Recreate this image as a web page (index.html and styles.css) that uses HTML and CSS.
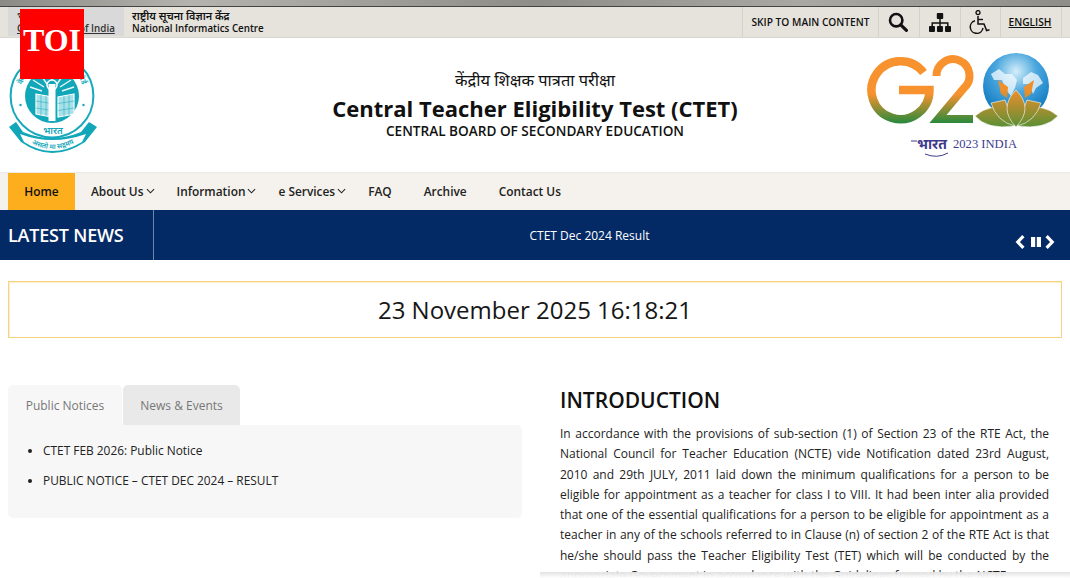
FILE: index.html
```html
<!DOCTYPE html>
<html lang="en">
<head>
<meta charset="utf-8">
<title>CTET</title>
<link rel="stylesheet" href="styles.css">
</head>
<body>
<div class="page">
  <div class="topbar">
    <div class="gov">
      <div class="gov-item gov-first"><span class="hi">भारत सरकार</span><a class="en">Government of India</a></div>
      <div class="gov-item"><span class="hi">राष्ट्रीय सूचना विज्ञान केंद्र</span><span class="en">National Informatics Centre</span></div>
    </div>
    <div class="tools">
      <div class="tool skip">SKIP TO MAIN CONTENT</div>
      <div class="tool icon-tool nudge"><svg width="20" height="20" viewBox="0 0 20 20"><circle cx="8.2" cy="8.2" r="6.2" fill="none" stroke="#111" stroke-width="2.6"/><path d="M12.8 12.8 18.4 18.4" stroke="#111" stroke-width="3.2" stroke-linecap="round"/></svg></div>
      <div class="tool icon-tool"><svg width="22" height="19" viewBox="0 0 24 19" preserveAspectRatio="none"><rect x="8.5" y="0" width="7" height="6" rx="1" fill="#111"/><path d="M12 6V10M3.5 13V10H20.5V13M12 10V13" fill="none" stroke="#111" stroke-width="1.6"/><rect x="0" y="13" width="6.5" height="6" rx="1" fill="#111"/><rect x="8.7" y="13" width="6.5" height="6" rx="1" fill="#111"/><rect x="17.5" y="13" width="6.5" height="6" rx="1" fill="#111"/></svg></div>
      <div class="tool icon-tool narrow"><svg width="22" height="24" viewBox="0 0 22 24"><circle cx="10" cy="2.6" r="2" fill="none" stroke="#111" stroke-width="1.3"/><path d="M10 6V14H16L18.6 20.5 21.5 19.8" fill="none" stroke="#111" stroke-width="1.5"/><path d="M10 9.5H15" stroke="#111" stroke-width="1.4"/><path d="M7 10.8A6.4 6.4 0 1 0 15 18" fill="none" stroke="#111" stroke-width="1.5"/></svg></div>
      <div class="tool lang">ENGLISH</div>
    </div>
  </div>

  <header class="masthead">
    <svg class="emblem" width="90" height="100" viewBox="0 0 90 100">
      <defs>
        <path id="ringText" d="M14 55A32 32 0 1 1 72 55"/>
        <path id="ribbonText" d="M12 82Q43 108 76 82"/>
      </defs>
      <circle cx="43" cy="42" r="41.4" fill="none" stroke="#19a9bd" stroke-width="2"/>
      <circle cx="43" cy="42" r="27" fill="#12a6b9"/>
      <text class="ring-label"><textPath href="#ringText" startOffset="50%" text-anchor="middle">केन्द्रीय माध्यमिक शिक्षा बोर्ड</textPath></text>
      <circle cx="11.5" cy="51" r="1.2" fill="#12a6b9"/>
      <circle cx="74.5" cy="51" r="1.2" fill="#12a6b9"/>
      <path d="M43 24V32M31 20 38 30M55 20 48 30M24 26 35 33M62 26 51 33M21 33 33 37M65 33 53 37" stroke="#e8f8fa" stroke-width="1.4"/>
      <circle cx="43" cy="31" r="5" fill="#12a6b9" stroke="#fff" stroke-width="1.5"/>
      <path d="M27 40 43 43V63L27 60ZM65 40 49 43V63L65 60Z" fill="#a8e0e8" stroke="#fff" stroke-width="1.2"/>
      <path d="M32 41V61M37 42V62M27 47 43 49.5M27 54 43 56.5M60 41V61M55 42V62M65 47 49 49.5M65 54 49 56.5" stroke="#12a6b9" stroke-width=".5"/>
      <rect x="39.5" y="30" width="7" height="37" fill="#fff"/>
      <path d="M0 73 7 68 14 78Q43 90 72 78L80 68 88 73 76 88Q43 110 12 88Z" fill="#12a6b9"/>
      <path d="M11 80Q43 92 77 80L73 88Q43 106 15 88Z" fill="#fff"/>
      <text class="ribbon-label"><textPath href="#ribbonText" startOffset="50%" text-anchor="middle">असतो मा सद्गमय</textPath></text>
      <text class="bharat" x="44" y="80" text-anchor="middle">भारत</text>
    </svg>
    <div class="title">
      <div class="title-hi">केंद्रीय शिक्षक पात्रता परीक्षा</div>
      <h1>Central Teacher Eligibility Test (CTET)</h1>
      <div class="title-board">CENTRAL BOARD OF SECONDARY EDUCATION</div>
    </div>
    <svg class="g20" width="195" height="110" viewBox="0 0 195 110">
      <defs>
        <linearGradient id="tri" gradientUnits="userSpaceOnUse" x1="0" y1="44" x2="0" y2="72"><stop offset="0" stop-color="#f7922e"/><stop offset="1" stop-color="#2f8a3c"/></linearGradient>
        <linearGradient id="lotus" gradientUnits="userSpaceOnUse" x1="0" y1="40" x2="0" y2="76"><stop offset="0" stop-color="#ef8f2c"/><stop offset="1" stop-color="#5f8f35"/></linearGradient>
        <radialGradient id="globe" cx=".5" cy=".28" r=".7"><stop offset="0" stop-color="#d5eefa"/><stop offset=".45" stop-color="#4aa6dd"/><stop offset="1" stop-color="#0b77bf"/></radialGradient>
      </defs>
      <path d="M58.5 22.5A29 29 0 1 0 64.5 40H34" fill="none" stroke="url(#tri)" stroke-width="8.5"/>
      <path d="M71.5 26A16.5 16.5 0 1 1 99 38L73 69H108" fill="none" stroke="url(#tri)" stroke-width="8"/>
      <circle cx="151" cy="36" r="33" fill="url(#globe)"/>
      <path d="M126 24 134 19 140 24 147 24 152 30 150 38 146 46 141 40 137 30 129 30ZM158 28 166 22 173 25 178 33 171 38 168 44 164 34 158 34Z" fill="#f4fbff" opacity=".75"/>
      <path d="M133 30 143 37 142 48 136 44ZM169 30 159 37 160 48 166 44Z" fill="url(#lotus)"/>
      <path d="M110 66Q126 52 144 61L149 76Q122 80 110 66ZM193 66Q177 52 158 61L153 76Q180 80 193 66Z" fill="url(#lotus)" stroke="#fff" stroke-width=".6"/>
      <path d="M126 53 140 50 150 76Q132 72 126 53ZM176 53 162 50 152 76Q170 72 176 53Z" fill="url(#lotus)" stroke="#fff" stroke-width=".6"/>
      <path d="M151 40Q169 58 151 77 133 58 151 40Z" fill="url(#lotus)" stroke="#fff" stroke-width=".6"/>
      <path d="M46 91H52M60 104Q72 109 83 103" fill="none" stroke="#3e3a8c" stroke-width="1"/>
      <text class="g20-hi" x="52" y="99">भारत</text>
      <text class="g20-en" x="88" y="98">2023 INDIA</text>
    </svg>
  </header>

  <nav class="nav">
    <a class="nav-item active">Home</a>
    <a class="nav-item caret">About Us<svg width="9" height="6" viewBox="0 0 10 6"><path d="M1 1 5 5 9 1" fill="none" stroke="#222" stroke-width="1.2"/></svg></a>
    <a class="nav-item caret">Information<svg width="9" height="6" viewBox="0 0 10 6"><path d="M1 1 5 5 9 1" fill="none" stroke="#222" stroke-width="1.2"/></svg></a>
    <a class="nav-item caret">e Services<svg width="9" height="6" viewBox="0 0 10 6"><path d="M1 1 5 5 9 1" fill="none" stroke="#222" stroke-width="1.2"/></svg></a>
    <a class="nav-item">FAQ</a>
    <a class="nav-item">Archive</a>
    <a class="nav-item">Contact Us</a>
  </nav>

  <section class="news">
    <div class="news-label">LATEST NEWS</div>
    <div class="news-text">CTET Dec 2024 Result</div>
    <div class="news-controls">
      <svg class="prev" width="10" height="14" viewBox="0 0 10 14"><path d="M8.4 1.2 2.8 7 8.4 12.8" fill="none" stroke="#fff" stroke-width="3.2"/></svg>
      <svg width="10" height="10" viewBox="0 0 10 10"><rect x="0" y="0" width="4.2" height="10" fill="#fff"/><rect x="5.8" y="0" width="4.2" height="10" fill="#fff"/></svg>
      <svg width="10" height="14" viewBox="0 0 10 14"><path d="M1.6 1.2 7.2 7 1.6 12.8" fill="none" stroke="#fff" stroke-width="3.2"/></svg>
    </div>
  </section>

  <div class="clock">23 November 2025 16:18:21</div>

  <main class="content">
    <div class="notices">
      <div class="tabs">
        <div class="tab tab-active">Public Notices</div>
        <div class="tab">News &amp; Events</div>
      </div>
      <div class="tab-panel">
        <ul>
          <li>CTET FEB 2026: Public Notice</li>
          <li>PUBLIC NOTICE – CTET DEC 2024 – RESULT</li>
        </ul>
      </div>
    </div>
    <article class="intro">
      <h2>INTRODUCTION</h2>
      <p>In accordance with the provisions of sub-section (1) of Section 23 of the RTE Act, the National Council for Teacher Education (NCTE) vide Notification dated 23rd August, 2010 and 29th JULY, 2011 laid down the minimum qualifications for a person to be eligible for appointment as a teacher for class I to VIII. It had been inter alia provided that one of the essential qualifications for a person to be eligible for appointment as a teacher in any of the schools referred to in Clause (n) of section 2 of the RTE Act is that he/she should pass the Teacher Eligibility Test (TET) which will be conducted by the appropriate Government in accordance with the Guidelines framed by the NCTE.</p>
    </article>
  </main>
</div>
<div class="top-shade"></div>
<div class="bottom-shade"></div>
<div class="toi">TOI</div>
</body>
</html>
```
FILE: styles.css
```css
* { box-sizing: border-box; }
html, body { margin: 0; padding: 0; height: 578px; overflow: hidden; background: #fff; }
body { font-family: "Open Sans", "Noto Sans", sans-serif; color: #111; }
a { color: inherit; }
.page { width: 1070px; }

.topbar { height: 38px; padding-top: 7px; background: #e6e3dc; border-bottom: 1px solid #d8d6d0; display: flex; justify-content: space-between; }
.gov { display: flex; padding-left: 8px; }
.gov-item { display: flex; flex-direction: column; justify-content: center; height: 29px; padding: 0 8px; line-height: 13px; }
.gov-first { width: 116px; padding-left: 9px; background: #d9d9d9; color: #333; }
.gov-first .en { text-decoration: underline; }
.hi { font-family: "Noto Sans", "Open Sans", sans-serif; font-size: 10.8px; font-weight: 600; }
.en { font-size: 9.8px; font-weight: 600; white-space: nowrap; }
.tools { display: flex; height: 30px; padding-right: 8px; }
.tool { display: flex; align-items: center; justify-content: center; border-left: 1px solid #d4d2cb; font-size: 10.2px; font-weight: 600; }
.skip { width: 136px; }
.icon-tool { width: 41px; }
.icon-tool.nudge { padding-right: 2px; }
.icon-tool.narrow { width: 40px; padding-right: 3px; }
.lang { width: 62px; padding-right: 2px; border-right: 1px solid #d4d2cb; text-decoration: underline; }

.masthead { height: 134px; position: relative; display: flex; justify-content: space-between; padding: 0 10px 0 9px; }
.emblem { margin-top: 16px; }
.ring-label { font-family: "Noto Sans", sans-serif; font-size: 7.5px; font-weight: 600; fill: #12a6b9; }
.ribbon-label { font-family: "Noto Sans", sans-serif; font-size: 7px; font-weight: 600; fill: #12a6b9; }
.bharat { font-family: "Noto Sans", sans-serif; font-size: 9.5px; font-weight: 600; fill: #12a6b9; }
.title { position: absolute; left: 0; right: 0; top: 31px; text-align: center; }
.title-hi { font-family: "Noto Sans", sans-serif; font-size: 16.4px; line-height: 22px; }
h1 { margin: 0 0 -1px; padding-top: 1px; font-size: 22px; line-height: 32px; font-weight: 700; color: #111; }
.title-board { font-size: 13.6px; line-height: 16px; font-weight: 600; }
.g20 { margin-top: 12px; }
.g20-hi { font-family: "Noto Sans", sans-serif; font-size: 14px; font-weight: 700; fill: #3e3a8c; }
.g20-en { font-family: "Liberation Serif", serif; font-size: 12.6px; fill: #3e3a8c; }

.nav { height: 38px; padding-left: 8px; background: #f5f2ed; border-top: 1px solid #eceae5; display: flex; font-size: 11.9px; font-weight: 600; color: #222; }
.nav-item { display: flex; align-items: center; padding: 0 16px 1px; gap: 2px; height: 37px; }
.nav-item.caret { padding-right: 6px; }
.active { background: #fdae1c; color: #111; width: 67px; justify-content: center; padding: 0 0 1px; }

.news { height: 50px; background: #042a66; color: #fff; display: flex; align-items: center; position: relative; }
.news-label { width: 154px; height: 50px; padding-left: 8px; border-right: 1px solid #6f86ab; font-size: 18px; font-weight: 600; line-height: 50px; letter-spacing: -.2px; }
.news-text { flex: 1; text-align: center; font-size: 12px; font-weight: 500; padding-right: 45px; }
.news-controls { position: absolute; right: 15px; top: 25px; display: flex; align-items: center; gap: 4px; }
.prev { margin-right: 2px; }

.clock { margin: 21px 8px 0; height: 57px; border: 1px solid #f6d283; box-shadow: inset 1px 1px 0 rgba(252, 222, 165, .5); font-size: 24px; line-height: 55px; text-align: center; color: #161616; }

.content { display: flex; padding: 47px 21px 0 8px; gap: 38px; }
.notices { width: 514px; flex-shrink: 0; }
.tabs { display: flex; gap: 1px; height: 40px; font-size: 12px; color: #777; }
.tab { width: 117px; background: #e9e9e9; border-radius: 5px 5px 0 0; line-height: 41px; text-align: center; }
.tab-active { width: 114px; background: #f7f7f7; }
.tab-panel { height: 93px; background: #f7f7f7; border-radius: 0 5px 5px 5px; padding-top: 10px; font-size: 11.9px; color: #222; }
.tab-panel ul { margin: 0; padding-left: 35px; }
.tab-panel li { line-height: 30px; }
.intro { flex: 1; }
h2 { margin: 0 0 9px; font-size: 21px; line-height: 30px; font-weight: 600; color: #111; }
.intro p { margin: 0; font-size: 12px; line-height: 20.25px; text-align: justify; color: #222; }

.top-shade { position: absolute; left: 0; top: 0; width: 1070px; height: 7px; background: linear-gradient(90deg, #8c8a85, #b5b3ad 18%, #8f8d88 50%, #aaa8a3 75%, #8f8d88); border-bottom: 1px solid #444; }
.bottom-shade { position: absolute; left: 540px; top: 572px; width: 530px; height: 6px; background: linear-gradient(180deg, rgba(225,225,225,.95), rgba(255,255,255,.98)); }
.toi { position: absolute; left: 20px; top: 9px; width: 64px; height: 70px; background: #f00; color: #fff; font-family: "Liberation Serif", serif; font-weight: 700; font-size: 32px; line-height: 62px; text-align: center; }
```
